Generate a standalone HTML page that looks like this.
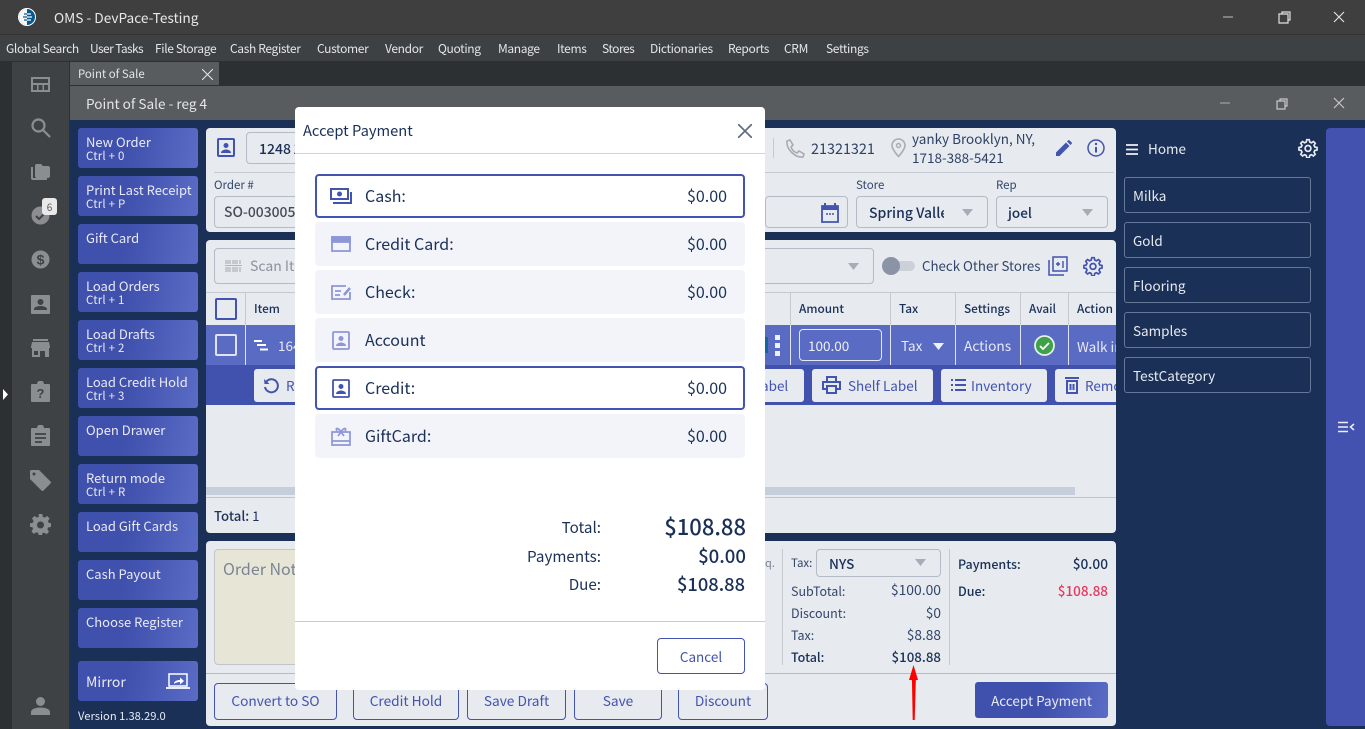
<!DOCTYPE html>
<html><head><meta charset="utf-8"><style>
html,body{margin:0;padding:0;width:1365px;height:729px;overflow:hidden;background:#1a3057;font-family:"Noto Sans CJK JP","Liberation Sans",sans-serif}
div,span,svg{position:absolute;box-sizing:border-box}
.t{white-space:nowrap;line-height:1;}
.m{top:43px;font-size:12px;letter-spacing:-.35px;color:#e4e6e8}
.lb{left:78px;width:120px;height:40px;border-radius:3px;background:linear-gradient(100deg,#3f50ad 40%,#5a6cc5);color:#e8eaf5}
.lb b{position:absolute;left:8px;top:7px;font-weight:400;font-size:13px;line-height:1;white-space:nowrap}
.lb i{position:absolute;left:8px;top:23px;font-style:normal;font-size:11.5px;letter-spacing:.2px;line-height:1;white-space:nowrap}
.panel{background:#e7eaee;border-radius:4px}
.box{border:1px solid #b4bac6;border-radius:4px}
.h{top:303px;font-size:11.8px;color:#1a3057;font-weight:500}
.vl{width:1px;background:#c6cacf}
.r{left:315px;width:430px;height:44px;border-radius:4px;background:#f3f4fa}
.r.s{background:#fff;border:2px solid #4253b0}
.r .a{position:absolute;left:50px;top:13px;font-size:16px;color:#1a3057;line-height:1;white-space:nowrap}
.r.s .a{left:48px;top:11px}
.r .v{position:absolute;right:18px;top:13px;font-size:16px;color:#1a3057;line-height:1}
.r.s .v{right:16px;top:11px}
.r svg{left:16px;top:14px}
.r.s svg{left:13px;top:12px}
.cat{left:1124px;width:187px;height:36px;border:1px solid #66789a;border-radius:3px;color:#e8eaf0;font-size:13.5px;padding:11px 8px;line-height:1;white-space:nowrap}
.wb{height:37px;top:683px;border:1px solid #4253b0;border-radius:4px;color:#4253b0;font-size:13.7px;text-align:center;line-height:33px;white-space:nowrap}
.ab{top:369px;height:33px;background:#e7eaee;border-radius:3px;color:#4253b0;font-size:13.5px;line-height:33px;white-space:nowrap;overflow:hidden}
.g{fill:#8b8e90}
.s12{font-size:12.5px;color:#33466a;line-height:1;white-space:nowrap}
</style></head><body>
<div style="left:0;top:0;width:1365px;height:34px;background:#3f3f3f"></div>
<div style="left:0;top:34px;width:1365px;height:1px;background:#333"></div>
<div style="left:0;top:35px;width:1365px;height:26px;background:#3e4144"></div>
<div style="left:0;top:61px;width:1365px;height:25px;background:#2d3033"></div>
<div style="left:0;top:61px;width:12px;height:668px;background:#2d3033"></div>
<div style="left:12px;top:62px;width:57px;height:667px;background:#3f4244"></div>
<div style="left:69px;top:62px;width:1px;height:667px;background:#2d3033"></div>

<svg style="left:17px;top:8px" width="20" height="18" viewBox="0 0 20 18"><circle cx="10" cy="9" r="8.5" fill="#06588f" stroke="#fff" stroke-width="1"/><path d="M10 1a8 8 0 0 0 0 16z" fill="#fff" opacity=".95"/><path d="M6 6h8M5 9h10M6 12h8" stroke="#fff" stroke-width="1.3"/><path d="M7 6h3M6 9h4M7 12h3" stroke="#06588f" stroke-width="1.3"/></svg>
<div class="t" style="left:54px;top:11px;font-size:13.7px;color:#e8e8e8">OMS - DevPace-Testing</div>
<svg style="left:1220px;top:10px" width="140" height="16" viewBox="0 0 140 16" fill="none" stroke="#e0e0e0" stroke-width="1.2"><path d="M3 7h10" stroke="#aaa"/><path d="M59 4h9v9h-9zM62 4V2h8v8h-2" /><path d="M114 2l10 10M124 2l-10 10"/></svg>

<div class="t m" style="left:6px">Global Search</div>
<div class="t m" style="left:90px;letter-spacing:-.6px">User Tasks</div>
<div class="t m" style="left:155px">File Storage</div>
<div class="t m" style="left:230px">Cash Register</div>
<div class="t m" style="left:317px">Customer</div>
<div class="t m" style="left:385px">Vendor</div>
<div class="t m" style="left:438px">Quoting</div>
<div class="t m" style="left:498px">Manage</div>
<div class="t m" style="left:557px">Items</div>
<div class="t m" style="left:602px;letter-spacing:-.5px">Stores</div>
<div class="t m" style="left:650px">Dictionaries</div>
<div class="t m" style="left:728px">Reports</div>
<div class="t m" style="left:784px">CRM</div>
<div class="t m" style="left:826px">Settings</div>

<!-- sidebar icons -->
<svg style="left:31px;top:77px" width="19" height="15" viewBox="0 0 19 15"><path class="g" fill-rule="evenodd" d="M0 0h19v15H0zM2 2v4h15V2zM2 8v5h4V8zM7.500 8v5h4V8zM13 8v5h4V8z"/></svg>
<svg style="left:31px;top:118px" width="20" height="20" viewBox="0 0 20 20" fill="none" stroke="#8b8e90" stroke-width="2.200"><circle cx="7.500" cy="7.500" r="6"/><path d="M12 12l7 7"/></svg>
<svg style="left:31px;top:164px" width="19" height="16" viewBox="0 0 19 16"><path class="g" d="M0 3h2v11h14v2H2a2 2 0 0 1-2-2zM4 2a2 2 0 0 1 2-2h4l2 2h5a2 2 0 0 1 2 2v8a2 2 0 0 1-2 2H6a2 2 0 0 1-2-2z"/></svg>
<svg style="left:31px;top:206px" width="19" height="19" viewBox="0 0 19 19"><circle class="g" cx="9.500" cy="9.500" r="9"/><path d="M5 10l3 3 6-6" fill="none" stroke="#3f4244" stroke-width="2"/></svg>
<div style="left:42px;top:198px;width:15px;height:17px;background:#e9e9e9;border-radius:3px;font-size:10px;color:#555;text-align:center;line-height:17px">6</div>
<svg style="left:31px;top:250px" width="19" height="19" viewBox="0 0 19 19"><circle class="g" cx="9.500" cy="9.500" r="9"/><text x="9.500" y="14.500" font-size="14" font-weight="700" text-anchor="middle" fill="#3f4244" font-family="Liberation Sans">$</text></svg>
<svg style="left:31px;top:295px" width="19" height="19" viewBox="0 0 19 19"><path class="g" fill-rule="evenodd" d="M1 0h17a1 1 0 0 1 1 1v17a1 1 0 0 1-1 1H1a1 1 0 0 1-1-1V1a1 1 0 0 1 1-1zM9.500 4a3 3 0 1 0 .01 0zM3 15h13v-1c0-2-4-3-6.500-3S3 12 3 14z"/></svg>
<svg style="left:31px;top:339px" width="19" height="18" viewBox="0 0 19 18"><path class="g" fill-rule="evenodd" d="M2 0h15v2H2zM1 3h17l1 5v1h-1v9h-4v-6H9v6H1V9H0V8zM3 12v4h4v-4z"/></svg>
<svg style="left:31px;top:381px" width="19" height="21" viewBox="0 0 19 21"><path class="g" d="M1 3h5a3.500 3.500 0 0 1 7 0h5a1 1 0 0 1 1 1v16a1 1 0 0 1-1 1H1a1 1 0 0 1-1-1V4a1 1 0 0 1 1-1z"/><text x="9.500" y="17" font-size="13" font-weight="700" text-anchor="middle" fill="#3f4244" font-family="Liberation Sans">?</text></svg>
<svg style="left:31px;top:425px" width="19" height="21" viewBox="0 0 19 21"><path class="g" d="M1 3h5a3.500 3.500 0 0 1 7 0h5a1 1 0 0 1 1 1v16a1 1 0 0 1-1 1H1a1 1 0 0 1-1-1V4a1 1 0 0 1 1-1z"/><path d="M4 9h11M4 13h11M4 17h7" stroke="#3f4244" stroke-width="1.700"/></svg>
<svg style="left:30px;top:470px" width="21" height="21" viewBox="0 0 21 21"><path class="g" d="M0 1.500A1.500 1.500 0 0 1 1.500 0H9l11.500 11.500a1.500 1.500 0 0 1 0 2l-7 7a1.500 1.500 0 0 1-2 0L0 9z"/><circle cx="4" cy="4" r="1.500" fill="#3f4244"/></svg>
<svg style="left:30px;top:514px" width="21" height="21" viewBox="0 0 24 24"><path class="g" fill-rule="evenodd" d="M10 0h4l.7 3.300 2 .9L19.600 2.300l2.800 2.800-1.900 2.900.9 2L24 10.700v4l-3.300.7-.9 2 1.900 2.900-2.800 2.800-2.900-1.900-2 .9L14 25h-4l-.7-3.300-2-.9-2.900 1.900-2.800-2.800 1.900-2.900-.9-2L0 14.700v-4l3.300-.7.900-2L2.300 5.100l2.800-2.800L8 4.200l2-.9zM12 8.500a4 4 0 1 0 .01 0z"/></svg>
<svg style="left:31px;top:697px" width="19" height="18" viewBox="0 0 19 18"><circle class="g" cx="9.500" cy="4.500" r="4.500"/><path class="g" d="M0 18v-3c0-3 5-4.500 9.500-4.500S19 12 19 15v3z"/></svg>
<svg style="left:2px;top:389px" width="7" height="11" viewBox="0 0 7 11"><path d="M1 0l5 5.500-5 5.500z" fill="#fff"/></svg>

<!-- tab / window head -->
<div style="left:70px;top:62px;width:149px;height:23px;background:#585c5f"></div>
<div class="t" style="left:78px;top:69px;font-size:11.4px;color:#e4e6e8">Point of Sale</div>
<svg style="left:202px;top:69px" width="11" height="11" viewBox="0 0 11 11" stroke="#e8e8e8" fill="none"><path d="M0 0l11 11M11 0L0 11"/></svg>
<div style="left:70px;top:86px;width:1295px;height:34px;background:#585c5f"></div>
<div class="t" style="left:86px;top:97px;font-size:13.6px;color:#e4e6e8">Point of Sale - reg 4</div>
<svg style="left:1216px;top:96px" width="140" height="16" viewBox="0 0 140 16" fill="none" stroke="#c8c8c8" stroke-width="1.200"><path d="M4 7h10" stroke="#a0a0a0"/><path d="M61 5h8v8h-8zM64 5V3h7v7h-2"/><path d="M118 2l10 10M128 2l-10 10"/></svg>

<!-- left buttons -->
<div class="lb" style="top:128px"><b>New Order</b><i>Ctrl + 0</i></div>
<div class="lb" style="top:176px"><b>Print Last Receipt</b><i>Ctrl + P</i></div>
<div class="lb" style="top:224px"><b>Gift Card</b></div>
<div class="lb" style="top:272px"><b>Load Orders</b><i>Ctrl + 1</i></div>
<div class="lb" style="top:320px"><b>Load Drafts</b><i>Ctrl + 2</i></div>
<div class="lb" style="top:368px"><b>Load Credit Hold</b><i>Ctrl + 3</i></div>
<div class="lb" style="top:416px"><b>Open Drawer</b></div>
<div class="lb" style="top:464px"><b>Return mode</b><i>Ctrl + R</i></div>
<div class="lb" style="top:512px"><b>Load Gift Cards</b></div>
<div class="lb" style="top:560px"><b>Cash Payout</b></div>
<div class="lb" style="top:608px"><b>Choose Register</b></div>
<div class="lb" style="top:661px"><b style="top:14px;font-size:14px">Mirror</b>
<svg style="left:88px;top:12px" width="24" height="16" viewBox="0 0 24 16" fill="none"><path d="M3 1h18v12H3z" stroke="#fff" stroke-width="1.500"/><path d="M0 15h24" stroke="#fff" stroke-width="1.700"/><path d="M8 11c0-3 3-4 6-4V4.500l4 3.500-4 3.500V9c-2 0-4 .500-6 2z" fill="#fff"/></svg></div>
<div class="t" style="left:78px;top:711px;font-size:11.2px;color:#e8eaf0">Version 1.38.29.0</div>

<!-- panel 1 -->
<div class="panel" style="left:206px;top:128px;width:910px;height:104px"></div>
<svg style="left:217px;top:138px" width="18" height="19" viewBox="0 0 18 19"><rect x="1" y="1" width="16" height="17" rx="1" fill="none" stroke="#4253b0" stroke-width="2"/><circle cx="9" cy="7.500" r="2.500" fill="#4253b0"/><path d="M4 15c0-2.500 3-3.500 5-3.500s5 1 5 3.500z" fill="#4253b0"/></svg>
<div class="box" style="left:246px;top:132px;width:60px;height:32px"></div>
<div class="t" style="left:259px;top:142px;font-size:14px;color:#1a3057;font-weight:500;word-spacing:-1px">1248 1</div>
<div style="left:214px;top:172px;width:900px;height:1px;background:#c6cad2"></div>
<div class="t" style="left:214px;top:180px;font-size:11.5px;color:#33466a">Order #</div>
<div class="box" style="left:214px;top:196px;width:90px;height:32px"></div>
<div class="t" style="left:224px;top:206px;font-size:13.9px;color:#444c57;font-weight:500">SO-003005</div>
<div style="left:773px;top:138px;width:1px;height:20px;background:#c6cad2"></div>
<svg style="left:786px;top:139px" width="19" height="19" viewBox="0 0 19 19"><path d="M1 2l3-1 3 5-2 2c1 3 3 5 6 6l2-2 5 3-1 3c-8 1-17-8-16-16z" fill="none" stroke="#a9adb3" stroke-width="1.600"/></svg>
<div class="t" style="left:811px;top:142px;font-size:14.4px;color:#2f4265">21321321</div>
<svg style="left:891px;top:138px" width="15" height="20" viewBox="0 0 15 20"><path d="M7.500 1a6.500 6.500 0 0 1 6.500 6.500c0 4-6.500 11-6.500 11S1 11.500 1 7.500A6.500 6.500 0 0 1 7.500 1z" fill="none" stroke="#a9adb3" stroke-width="1.600"/><circle cx="7.500" cy="7.500" r="2" fill="none" stroke="#a9adb3" stroke-width="1.400"/></svg>
<div class="t" style="left:912px;top:132px;font-size:13.5px;color:#2f4265">yanky Brooklyn, NY,</div>
<div class="t" style="left:912px;top:151px;font-size:13.5px;color:#2f4265">1718-388-5421</div>
<svg style="left:1056px;top:140px" width="16" height="16" viewBox="0 0 16 16"><path d="M0 16v-3.500L10 2.500 13.500 6 3.500 16zM11 1.500l1-1a1.200 1.200 0 0 1 1.700 0l1.800 1.800a1.200 1.200 0 0 1 0 1.700l-1 1z" fill="#4253b0"/></svg>
<svg style="left:1087px;top:139px" width="18" height="18" viewBox="0 0 18 18"><circle cx="9" cy="9" r="8" fill="none" stroke="#4253b0" stroke-width="1.500"/><path d="M9 8v5.500" stroke="#4253b0" stroke-width="2"/><circle cx="9" cy="5" r="1.200" fill="#4253b0"/></svg>
<div class="t" style="left:856px;top:180px;font-size:11.5px;color:#33466a">Store</div>
<div class="t" style="left:996px;top:180px;font-size:11.5px;color:#33466a">Rep</div>
<div class="box" style="left:765px;top:196px;width:83px;height:32px"></div>
<svg style="left:821px;top:203px" width="18" height="20" viewBox="0 0 18 20"><path d="M1 3h16v16H1z" fill="none" stroke="#4253b0" stroke-width="1.800"/><path d="M1 3h16v4H1z" fill="#4253b0"/><path d="M4 0v3M14 0v3" stroke="#4253b0" stroke-width="2"/><path d="M5 11h2M8 11h2M11 11h2" stroke="#4253b0" stroke-width="1.500"/></svg>
<div class="box" style="left:856px;top:196px;width:132px;height:32px"></div>
<div class="t" style="left:869px;top:206px;font-size:14px;color:#1a3057;font-weight:500;width:75px;overflow:hidden;line-height:1.100">Spring Valley</div>
<svg style="left:962px;top:209px" width="11" height="7"><path d="M0 0h11L5.500 7z" fill="#a7adb8"/></svg>
<div class="box" style="left:996px;top:196px;width:112px;height:32px"></div>
<div class="t" style="left:1008px;top:206px;font-size:13.5px;color:#1a3057;font-weight:500">joel</div>
<svg style="left:1082px;top:209px" width="11" height="7"><path d="M0 0h11L5.500 7z" fill="#a7adb8"/></svg>

<!-- panel 2 -->
<div class="panel" style="left:206px;top:240px;width:910px;height:293px"></div>
<div class="box" style="left:214px;top:248px;width:660px;height:36px"></div>
<svg style="left:225px;top:259px" width="17" height="14" viewBox="0 0 17 14" stroke="#b0b4ba"><path d="M0 6.500h17" /><path d="M1 1v4M3 1v4M5 1v4M8 1v4M10 1v4M12 1v4M15 1v4M1 8v5M3 8v5M5 8v5M8 8v5M10 8v5M12 8v5M15 8v5" stroke-width="1.200"/></svg>
<div class="t" style="left:250px;top:259px;font-size:14px;color:#8b929e">Scan It</div>
<svg style="left:848px;top:263px" width="11" height="7"><path d="M0 0h11L5.500 7z" fill="#a7adb8"/></svg>
<div style="left:886px;top:261px;width:29px;height:10px;border-radius:5px;background:#ccd1d9"></div>
<div style="left:882px;top:257px;width:18px;height:18px;border-radius:9px;background:#8a94a6"></div>
<div class="t" style="left:922px;top:259px;font-size:13.3px;color:#33466a">Check Other Stores</div>
<svg style="left:1048px;top:256px" width="20" height="20" viewBox="0 0 20 20" fill="none" stroke="#4253b0" stroke-width="1.500"><path d="M5 1h14v14H5z"/><path d="M1 4v15h15"/><path d="M8 8h4M10 6v4M15 5v7" stroke-width="1.400"/></svg>
<svg style="left:1083px;top:256px" width="20" height="20" viewBox="0 0 24 24" fill="none" stroke="#4253b0" stroke-width="2"><path d="M10.500 2h3l.6 2.800 2 .9 2.500-1.500 2.100 2.100-1.500 2.500.9 2 2.800.6v3l-2.800.6-.9 2 1.500 2.500-2.100 2.100-2.500-1.500-2 .9-.6 2.800h-3l-.6-2.800-2-.9-2.500 1.500-2.100-2.100 1.500-2.500-.9-2-2.800-.6v-3l2.800-.6.9-2L3.300 6.300l2.100-2.100 2.500 1.500 2-.9z"/><circle cx="12" cy="12.500" r="3.500"/></svg>

<div style="left:206px;top:292px;width:910px;height:1px;background:#c6cacf"></div>
<div style="left:245px;top:292px;width:1px;height:33px;background:#c6cacf"></div>
<div style="left:215px;top:298px;width:22px;height:22px;border:2px solid #4253b0;border-radius:2px"></div>
<div class="t h" style="left:254px">Item</div>
<div class="vl" style="left:790px;top:292px;height:33px"></div>
<div class="vl" style="left:890px;top:292px;height:33px"></div>
<div class="vl" style="left:955px;top:292px;height:33px"></div>
<div class="vl" style="left:1020px;top:292px;height:33px"></div>
<div class="vl" style="left:1068px;top:292px;height:33px"></div>
<div class="t h" style="left:799px">Amount</div>
<div class="t h" style="left:899px">Tax</div>
<div class="t h" style="left:964px">Settings</div>
<div class="t h" style="left:1029px">Avail</div>
<div class="t h" style="left:1077px">Action</div>

<div style="left:206px;top:325px;width:910px;height:40px;background:#5a6bc4"></div>
<div style="left:215px;top:334px;width:22px;height:22px;border:2px solid #dfe2f2;border-radius:2px"></div>
<div style="left:245px;top:325px;width:1px;height:40px;background:#dfe2f2"></div>
<svg style="left:254px;top:340px" width="15" height="11" viewBox="0 0 15 11" stroke="#fff" stroke-width="2"><path d="M0 1h8M3 5h9M6 9.500h8"/></svg>
<div class="t" style="left:278px;top:339px;font-size:13.5px;color:#e8eaf5">164</div>
<div style="left:765px;top:337px;width:3px;height:16px;background:#0f6a98"></div>
<div style="left:775px;top:335px;width:5px;height:5px;background:#eef0f8"></div>
<div style="left:775px;top:343px;width:5px;height:5px;background:#eef0f8"></div>
<div style="left:775px;top:351px;width:5px;height:5px;background:#eef0f8"></div>
<div class="vl" style="left:790px;top:325px;height:40px;background:#dfe2f2"></div>
<div class="vl" style="left:890px;top:325px;height:40px;background:#dfe2f2"></div>
<div class="vl" style="left:955px;top:325px;height:40px;background:#dfe2f2"></div>
<div class="vl" style="left:1020px;top:325px;height:40px;background:#dfe2f2"></div>
<div class="vl" style="left:1068px;top:325px;height:40px;background:#dfe2f2"></div>
<div style="left:799px;top:329px;width:83px;height:32px;border:1px solid #e6e8f5;border-radius:4px"></div>
<div class="t" style="left:808px;top:339px;font-size:13.5px;color:#eef0f8">100.00</div>
<div class="t" style="left:901px;top:339px;font-size:13.5px;color:#e8eaf5">Tax</div>
<svg style="left:933px;top:343px" width="11" height="7"><path d="M0 0h11L5.500 7z" fill="#f0f1f8"/></svg>
<div class="t" style="left:964px;top:339px;font-size:13.7px;color:#e8eaf5">Actions</div>
<svg style="left:1034px;top:335px" width="21" height="21" viewBox="0 0 21 21"><circle cx="10.500" cy="10.500" r="9.500" fill="#3fa14a" stroke="#e8f0e8" stroke-width="1.800"/><path d="M6 11l3 3 6-6" fill="none" stroke="#fff" stroke-width="1.800"/></svg>
<div class="t" style="left:1077px;top:339px;width:39px;overflow:hidden;font-size:13.5px;color:#e8eaf5;line-height:1.100">Walk in</div>

<div style="left:206px;top:365px;width:910px;height:40px;background:#4152ae"></div>
<div class="ab" style="left:254px;width:50px;padding-left:32px">R</div>
<svg style="left:263px;top:378px" width="17" height="17" viewBox="0 0 17 17" fill="none" stroke="#4253b0" stroke-width="2"><path d="M3.500 3.500A6.500 6.500 0 1 1 2 9"/><path d="M1 1l.5 5H6.500z" fill="#4253b0" stroke="none"/></svg>
<div class="ab" style="left:760px;width:44px;padding-left:1px">abel</div>
<div class="ab" style="left:812px;width:121px;padding-left:36px">Shelf Label</div>
<svg style="left:822px;top:376px" width="19" height="18" viewBox="0 0 19 18" fill="none" stroke="#4253b0" stroke-width="2"><path d="M5 5V1h9v4M5 13H1V6h17v7h-4"/><path d="M5 10h9v7H5z"/></svg>
<div class="ab" style="left:941px;width:106px;padding-left:30px">Inventory</div>
<svg style="left:951px;top:378px" width="15" height="14" viewBox="0 0 15 14" stroke="#4253b0" stroke-width="2"><path d="M0 2h2M4 2h11M0 7h2M4 7h11M0 12h2M4 12h11"/></svg>
<div class="ab" style="left:1055px;width:61px;padding-left:30px;border-radius:3px 0 0 3px">Remo</div>
<svg style="left:1065px;top:376px" width="14" height="18" viewBox="0 0 14 18" fill="none" stroke="#4253b0" stroke-width="2"><path d="M0 2h14M2 5h10v12H2zM5.500 8v6M8.500 8v6"/></svg>

<div style="left:206px;top:487px;width:869px;height:8px;background:#c7cedb"></div>
<div style="left:206px;top:497px;width:910px;height:1px;background:#c2c6cb"></div>
<div class="t" style="left:214px;top:509px;font-size:13.2px;color:#1f3358"><span style="position:static;font-weight:500">Total:</span> 1</div>

<!-- panel 3 -->
<div class="panel" style="left:206px;top:541px;width:910px;height:185px"></div>
<div style="left:214px;top:549px;width:90px;height:116px;background:#e7e6d6;border:1px solid #c0c5cc;border-radius:4px"></div>
<div class="t" style="left:223px;top:560px;font-size:16px;color:#7a8494">Order Notes</div>
<div style="left:206px;top:673px;width:910px;height:1px;background:#b4bac6"></div>
<div class="t" style="left:765px;top:558px;font-size:11px;color:#7a8494">q.</div>
<div class="vl" style="left:782px;top:549px;height:116px"></div>
<div class="vl" style="left:949px;top:549px;height:116px"></div>
<div class="t s12" style="left:791px;top:558px;font-size:11.5px">Tax:</div>
<div class="box" style="left:816px;top:549px;width:125px;height:28px"></div>
<div class="t" style="left:829px;top:557px;font-size:13.5px;color:#1a3057;font-weight:500">NYS</div>
<svg style="left:915px;top:559px" width="11" height="7"><path d="M0 0h11L5.500 7z" fill="#a7adb8"/></svg>
<div class="t s12" style="left:791px;top:585px">SubTotal:</div><div class="t s12" style="right:424px;top:584px;font-size:13.9px">$100.00</div>
<div class="t s12" style="left:791px;top:607px">Discount:</div><div class="t s12" style="right:424px;top:606px;font-size:13.7px">$0</div>
<div class="t s12" style="left:791px;top:629px">Tax:</div><div class="t s12" style="right:424px;top:628px;font-size:13.7px">$8.88</div>
<div class="t s12" style="left:791px;top:651px;font-weight:500;color:#1a3057">Total:</div><div class="t s12" style="right:424px;top:650px;font-weight:500;color:#1a3057;font-size:13.3px">$108.88</div>
<div class="t s12" style="left:958px;top:558px;font-weight:500;color:#1a3057">Payments:</div><div class="t s12" style="right:257px;top:557px;font-weight:500;color:#1a3057;font-size:13.7px">$0.00</div>
<div class="t s12" style="left:958px;top:585px;font-weight:500;color:#1a3057">Due:</div><div class="t s12" style="right:257px;top:584px;color:#e8365d;font-weight:500;font-size:13.5px">$108.88</div>

<div class="wb" style="left:214px;width:123px">Convert to SO</div>
<div class="wb" style="left:353px;width:106px">Credit Hold</div>
<div class="wb" style="left:467px;width:99px">Save Draft</div>
<div class="wb" style="left:574px;width:88px">Save</div>
<div class="wb" style="left:678px;width:90px">Discount</div>
<div style="left:975px;top:682px;width:133px;height:36px;border-radius:3px;background:linear-gradient(100deg,#3f50ad 50%,#5a6cc5);color:#e8eaf5;font-size:13.5px;text-align:center;line-height:36px">Accept Payment</div>

<svg style="left:905px;top:664px" width="18" height="58" viewBox="0 0 18 58"><path d="M8.700 56l-.8-42h2z" fill="#f00" stroke="#f00" stroke-width="2"/><path d="M8.500 1l4.500 15H4z" fill="#f00"/></svg>

<!-- right -->
<svg style="left:1126px;top:144px" width="12" height="11" viewBox="0 0 12 11" stroke="#f0f0f4" stroke-width="1.800"><path d="M0 1h12M0 5.500h12M0 10h12"/></svg>
<div class="t" style="left:1148px;top:142px;font-size:13.5px;color:#e8eaf0">Home</div>
<svg style="left:1298px;top:138px" width="20" height="20" viewBox="0 0 24 24" fill="none" stroke="#e8eaf0" stroke-width="2"><path d="M10.500 2h3l.6 2.800 2 .9 2.500-1.500 2.100 2.100-1.500 2.500.9 2 2.800.6v3l-2.800.6-.9 2 1.500 2.500-2.100 2.100-2.500-1.500-2 .9-.6 2.800h-3l-.6-2.800-2-.9-2.500 1.500-2.100-2.100 1.500-2.500-.9-2-2.800-.6v-3l2.800-.6.9-2L3.300 6.300l2.100-2.100 2.500 1.500 2-.9z"/><circle cx="12" cy="12.500" r="3.500"/></svg>
<div class="cat" style="top:177px">Milka</div>
<div class="cat" style="top:222px">Gold</div>
<div class="cat" style="top:267px">Flooring</div>
<div class="cat" style="top:312px">Samples</div>
<div class="cat" style="top:357px">TestCategory</div>
<div style="left:1326px;top:128px;width:39px;height:598px;background:#4252ae;border-radius:4px 0 0 4px"></div>
<svg style="left:1338px;top:421px" width="17" height="12" viewBox="0 0 17 12" stroke="#eef0f8" stroke-width="1.500" fill="none"><path d="M0 1.500h10M0 6h10M0 10.500h10M16 3l-3.500 3 3.500 3"/></svg>

<!-- modal -->
<div style="left:295px;top:107px;width:470px;height:583px;background:#fff;border-radius:4px"></div>
<div class="t" style="left:303px;top:124px;font-size:14.7px;color:#1a3057">Accept Payment</div>
<svg style="left:738px;top:124px" width="14" height="14" viewBox="0 0 14 14" stroke="#5f6b7d" stroke-width="1.700"><path d="M0 0l14 14M14 0L0 14"/></svg>
<div style="left:295px;top:153px;width:470px;height:1px;background:#d0d4de"></div>

<div class="r s" style="top:174px"><svg width="22" height="17" viewBox="0 0 22 17" fill="none" stroke="#4253b0" stroke-width="2"><path d="M1 1h17v10H1z"/><circle cx="9.500" cy="6" r="2.500" fill="#4253b0" stroke="none"/><path d="M3 15h18V4"/></svg><span class="a">Cash:</span><span class="v">$0.00</span></div>
<div class="r" style="top:222px"><svg width="20" height="16" viewBox="0 0 20 16" fill="none" stroke="#8d96d8" stroke-width="1.800"><path d="M1 1h18v14H1z"/><path d="M1 1h18v5H1z" fill="#8d96d8"/></svg><span class="a">Credit Card:</span><span class="v">$0.00</span></div>
<div class="r" style="top:270px"><svg style="top:15px" width="20" height="15" viewBox="0 0 20 15" fill="none" stroke="#8d96d8" stroke-width="1.800"><path d="M15 1H1v13h18V7"/><path d="M4 6h6M4 10h5" /><path d="M13 10l6-7" stroke-width="2.500"/></svg><span class="a">Check:</span><span class="v">$0.00</span></div>
<div class="r" style="top:318px"><svg style="left:17px;top:13px" width="18" height="19" viewBox="0 0 18 19"><rect x="1" y="1" width="16" height="17" rx="1" fill="none" stroke="#8d96d8" stroke-width="1.800"/><circle cx="9" cy="7.500" r="2.500" fill="#8d96d8"/><path d="M4 15c0-2.500 3-3.500 5-3.500s5 1 5 3.500z" fill="#8d96d8"/></svg><span class="a">Account</span></div>
<div class="r s" style="top:366px"><svg style="left:15px;top:11px" width="18" height="19" viewBox="0 0 18 19"><rect x="1" y="1" width="16" height="17" rx="1" fill="none" stroke="#4253b0" stroke-width="1.800"/><circle cx="9" cy="7.500" r="2.500" fill="#4253b0"/><path d="M4 15c0-2.500 3-3.500 5-3.500s5 1 5 3.500z" fill="#4253b0"/></svg><span class="a">Credit:</span><span class="v">$0.00</span></div>
<div class="r" style="top:414px"><svg style="top:13px" width="20" height="20" viewBox="0 0 20 20" fill="none" stroke="#8d96d8" stroke-width="1.700"><path d="M1 5h18v13H1zM1 14h18"/><path d="M10 5C7 0 4 1 6 4M10 5c3-5 6-4 4-1M10 5L7 9M10 5l3 4"/></svg><span class="a">GiftCard:</span><span class="v">$0.00</span></div>

<div class="t" style="right:764px;top:520px;font-size:15.2px;color:#1a3057">Total:</div>
<div class="t" style="right:764px;top:549px;font-size:15.2px;color:#1a3057">Payments:</div>
<div class="t" style="right:764px;top:577px;font-size:15.2px;color:#1a3057">Due:</div>
<div class="t" style="right:619px;top:515px;font-size:22px;color:#1a3057;font-weight:500">$108.88</div>
<div class="t" style="right:619px;top:547px;font-size:18.6px;color:#1a3057;font-weight:500">$0.00</div>
<div class="t" style="right:620px;top:575px;font-size:18.3px;color:#1a3057;font-weight:500">$108.88</div>
<div style="left:295px;top:621px;width:470px;height:1px;background:#c8cad0"></div>
<div style="left:657px;top:638px;width:88px;height:36px;border:1px solid #4253b0;border-radius:4px;color:#4253b0;font-size:13.5px;text-align:center;line-height:34px">Cancel</div>
</body></html>
